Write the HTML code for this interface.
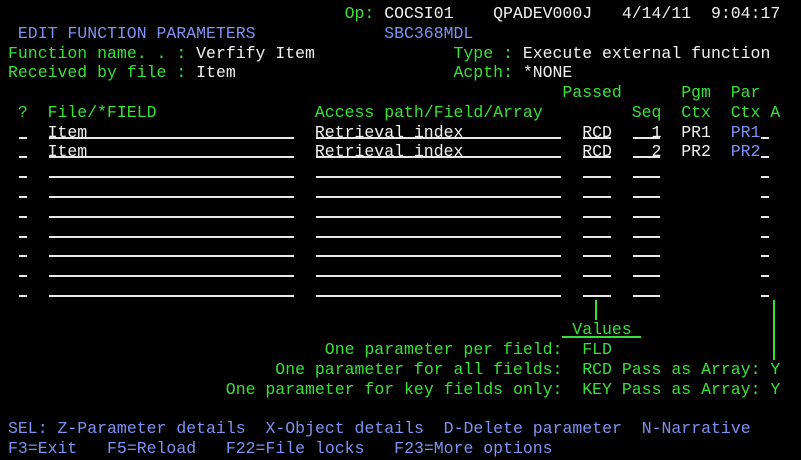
<!DOCTYPE html>
<html><head><meta charset="utf-8"><style>
html,body{margin:0;padding:0;background:#000;width:801px;height:460px;overflow:hidden;position:relative}
.t{position:absolute;left:calc(8px + var(--c)*9.9px);top:calc(4px + var(--r)*19.78px);font-family:"Liberation Mono",monospace;font-size:16.5px;line-height:20px;white-space:pre;color:#3ae03a}
.w{color:#f2f2f2}.b{color:#7d92f2}.g{color:#3ae03a}
.f{position:absolute;left:calc(8px + var(--c)*9.9px);top:calc(4px + var(--r)*19.78px);width:calc(var(--n)*9.9px - 2px);height:14px;border-bottom:2px solid #e8e8e8;margin-left:1px}
.v{position:absolute;background:#3ae03a;width:2px}
</style></head><body>
<div class="t" style="--c:34;--r:0">Op: <span class="w">COCSI01    QPADEV000J   4/14/11  9:04:17</span></div>
<div class="t b" style="--c:1;--r:1">EDIT FUNCTION PARAMETERS</div>
<div class="t b" style="--c:38;--r:1">SBC368MDL</div>
<div class="t" style="--c:0;--r:2">Function name. . : <span class="w">Verfify Item</span></div>
<div class="t" style="--c:45;--r:2">Type : <span class="w">Execute external function</span></div>
<div class="t" style="--c:0;--r:3">Received by file : <span class="w">Item</span></div>
<div class="t" style="--c:45;--r:3">Acpth: <span class="w">*NONE</span></div>
<div class="t" style="--c:56;--r:4">Passed</div>
<div class="t" style="--c:68;--r:4">Pgm  Par</div>
<div class="t" style="--c:1;--r:5">?  File/*FIELD</div>
<div class="t" style="--c:31;--r:5">Access path/Field/Array</div>
<div class="t" style="--c:63;--r:5">Seq  Ctx  Ctx A</div>

<div class="t w" style="--c:4;--r:6">Item</div>
<div class="t w" style="--c:31;--r:6">Retrieval index</div>
<div class="t w" style="--c:58;--r:6">RCD</div>
<div class="t w" style="--c:63;--r:6">  1</div>
<div class="t w" style="--c:68;--r:6">PR1</div>
<div class="t b" style="--c:73;--r:6">PR1</div>
<div class="t w" style="--c:4;--r:7">Item</div>
<div class="t w" style="--c:31;--r:7">Retrieval index</div>
<div class="t w" style="--c:58;--r:7">RCD</div>
<div class="t w" style="--c:63;--r:7">  2</div>
<div class="t w" style="--c:68;--r:7">PR2</div>
<div class="t b" style="--c:73;--r:7">PR2</div>

<div id="rows"></div>
<script>
var h='';for(var r=6;r<=14;r++){[[1,1],[4,25],[31,25],[58,3],[63,3],[76,1]].forEach(function(a){h+='<div class="f" style="--c:'+a[0]+';--r:'+r+';--n:'+a[1]+'"></div>';});}
document.getElementById('rows').innerHTML=h;
</script>

<div class="v" style="left:595px;top:300px;height:20px"></div>
<div class="v" style="left:773px;top:300px;height:60px"></div>
<div class="t" style="--c:57;--r:16">Values</div>
<div style="position:absolute;left:562px;top:336px;width:79px;height:2px;background:#3ae03a"></div>
<div class="t" style="--c:32;--r:17">One parameter per field:  FLD</div>
<div class="t" style="--c:27;--r:18">One parameter for all fields:  RCD Pass as Array: Y</div>
<div class="t" style="--c:22;--r:19">One parameter for key fields only:  KEY Pass as Array: Y</div>
<div class="t b" style="--c:0;--r:21">SEL: Z-Parameter details  X-Object details  D-Delete parameter  N-Narrative</div>
<div class="t b" style="--c:0;--r:22">F3=Exit   F5=Reload   F22=File locks   F23=More options</div>
</body></html>
